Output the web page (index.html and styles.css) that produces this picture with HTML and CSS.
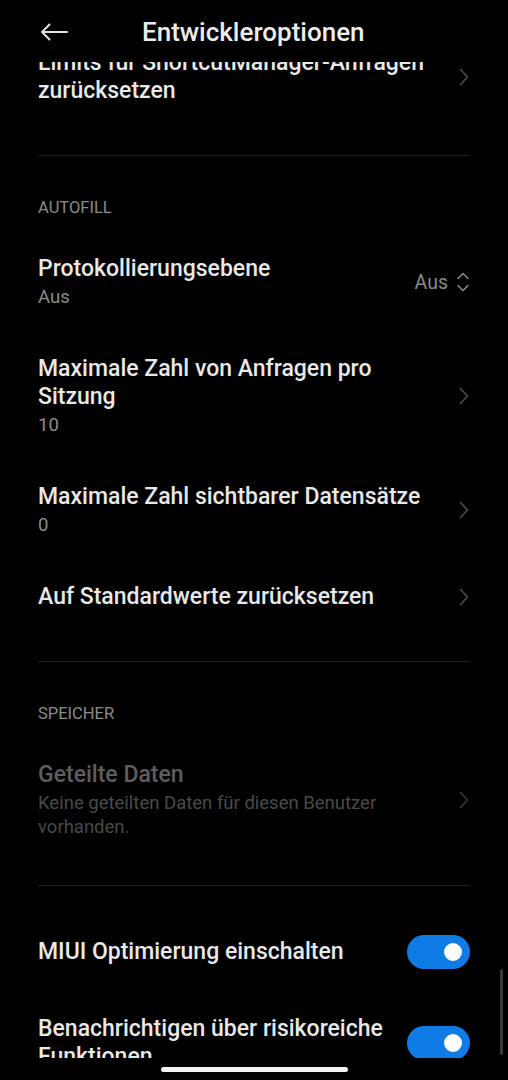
FILE: index.html
```html
<!DOCTYPE html>
<html lang="de">
<head>
  <meta charset="UTF-8">
  <meta name="viewport" content="width=device-width, initial-scale=1.0">
  <title>Entwickleroptionen</title>
  <link rel="stylesheet" href="styles.css">
</head>
<body>
  <div class="screen">
    <header class="topbar">
      <svg class="back" width="28" height="18" viewBox="0 0 28 18">
        <path d="M27 9H2M9.5 1.5L2 9l7.5 7.5" fill="none" stroke="#e2e2e2" stroke-width="2" stroke-linecap="round" stroke-linejoin="round"/>
      </svg>
      <h1>Entwickleroptionen</h1>
    </header>

    <div class="scroll">
      <div class="list">
        <div class="group">
          <div class="row">
            <div class="text">
              <div class="title">Limits für ShortcutManager-Anfragen zurücksetzen</div>
            </div>
            <svg class="chev" width="10" height="18" viewBox="0 0 10 18"><path d="M1.5 1.5L8.5 9l-7 7.5" fill="none" stroke="#4e4e4e" stroke-width="1.6" stroke-linecap="round" stroke-linejoin="round"/></svg>
          </div>
        </div>

        <div class="divider"></div>

        <div class="group">
          <div class="label">AUTOFILL</div>
          <div class="row">
            <div class="text">
              <div class="title">Protokollierungsebene</div>
              <div class="sub">Aus</div>
            </div>
            <div class="value">
              Aus
              <svg width="14" height="22" viewBox="0 0 14 22"><path d="M2 7.5L7 2.5l5 5M2 14.5l5 5 5-5" fill="none" stroke="#8a8a8a" stroke-width="1.6" stroke-linecap="round" stroke-linejoin="round"/></svg>
            </div>
          </div>
          <div class="row">
            <div class="text">
              <div class="title">Maximale Zahl von Anfragen pro Sitzung</div>
              <div class="sub">10</div>
            </div>
            <svg class="chev" width="10" height="18" viewBox="0 0 10 18"><path d="M1.5 1.5L8.5 9l-7 7.5" fill="none" stroke="#4e4e4e" stroke-width="1.6" stroke-linecap="round" stroke-linejoin="round"/></svg>
          </div>
          <div class="row">
            <div class="text">
              <div class="title">Maximale Zahl sichtbarer Datensätze</div>
              <div class="sub">0</div>
            </div>
            <svg class="chev" width="10" height="18" viewBox="0 0 10 18"><path d="M1.5 1.5L8.5 9l-7 7.5" fill="none" stroke="#4e4e4e" stroke-width="1.6" stroke-linecap="round" stroke-linejoin="round"/></svg>
          </div>
          <div class="row">
            <div class="text">
              <div class="title">Auf Standardwerte zurücksetzen</div>
            </div>
            <svg class="chev" width="10" height="18" viewBox="0 0 10 18"><path d="M1.5 1.5L8.5 9l-7 7.5" fill="none" stroke="#4e4e4e" stroke-width="1.6" stroke-linecap="round" stroke-linejoin="round"/></svg>
          </div>
        </div>

        <div class="divider"></div>

        <div class="group tight">
          <div class="label">SPEICHER</div>
          <div class="row disabled">
            <div class="text">
              <div class="title">Geteilte Daten</div>
              <div class="sub">Keine geteilten Daten für diesen Benutzer vorhanden.</div>
            </div>
            <svg class="chev" width="10" height="18" viewBox="0 0 10 18"><path d="M1.5 1.5L8.5 9l-7 7.5" fill="none" stroke="#3a3a3a" stroke-width="1.6" stroke-linecap="round" stroke-linejoin="round"/></svg>
          </div>
        </div>

        <div class="divider"></div>

        <div class="group top-gap">
          <div class="row toggle-row">
            <div class="text">
              <div class="title">MIUI Optimierung einschalten</div>
            </div>
            <div class="switch on"><span class="knob"></span></div>
          </div>
          <div class="row toggle-row">
            <div class="text">
              <div class="title">Benachrichtigen über risikoreiche Funktionen</div>
            </div>
            <div class="switch on"><span class="knob"></span></div>
          </div>
        </div>
      </div>
      <div class="scrollbar"></div>
    </div>

    <div class="navbar"><span class="handle"></span></div>
  </div>
</body>
</html>
```

FILE: styles.css
```css
body {
  margin: 0;
  background: #000;
  color: #e8e8e8;
  font-family: Roboto, "Noto Sans", sans-serif;
}
.screen {
  width: 508px;
  height: 1080px;
  display: flex;
  flex-direction: column;
  overflow: hidden;
}
.topbar {
  height: 62px;
  flex: none;
  display: flex;
  align-items: center;
  padding: 0 0 0 40px;
  background: #000;
  position: relative;
  z-index: 1;
}
.topbar .back {
  margin-top: 2px;
}
.topbar h1 {
  margin: 2px 0 0 74px;
  font-size: 26px;
  font-weight: 500;
  color: #ececec;
}
.scroll {
  flex: 1;
  overflow: hidden;
  position: relative;
}
.list {
  margin-top: -36px;
}
.group {
  padding-bottom: 27px;
}
.group.tight {
  padding-bottom: 23px;
}
.group.top-gap {
  padding-top: 26px;
}
.label {
  padding: 42px 38px 14px;
  font-size: 16.5px;
  line-height: 20px;
  color: #8c8c8c;
}
.row {
  display: flex;
  align-items: center;
  padding: 23px 38px;
  gap: 18px;
}
.toggle-row {
  gap: 8px;
}
.text {
  flex: 1;
  min-width: 0;
}
.title {
  font-size: 23px;
  line-height: 28px;
  font-weight: 500;
  color: #e8e8e8;
}
.sub {
  margin-top: 2px;
  font-size: 18.5px;
  line-height: 24px;
  color: #8c8c8c;
}
.row.disabled .title {
  color: #5e5e5e;
}
.row.disabled .sub {
  color: #4a4a4a;
}
.chev {
  flex: none;
  margin-right: 1px;
}
.value {
  display: flex;
  align-items: center;
  gap: 8px;
  font-size: 19.5px;
  color: #8a8a8a;
}
.divider {
  height: 1px;
  margin: 0 38px;
  background: #1f1f1f;
}
.switch {
  flex: none;
  width: 63px;
  height: 34px;
  border-radius: 17px;
  background: #0f7be4;
  display: flex;
  align-items: center;
  justify-content: flex-end;
  padding-right: 8px;
  box-sizing: border-box;
}
.knob {
  width: 18px;
  height: 18px;
  border-radius: 50%;
  background: #fff;
}
.scrollbar {
  position: absolute;
  right: 5px;
  bottom: 3px;
  width: 3px;
  height: 86px;
  border-radius: 2px;
  background: #3a3a3a;
}
.navbar {
  height: 22px;
  flex: none;
  display: flex;
  justify-content: center;
  padding-top: 9px;
  box-sizing: border-box;
}
.handle {
  width: 187px;
  height: 5px;
  border-radius: 3px;
  background: #f4f4f4;
}
```
